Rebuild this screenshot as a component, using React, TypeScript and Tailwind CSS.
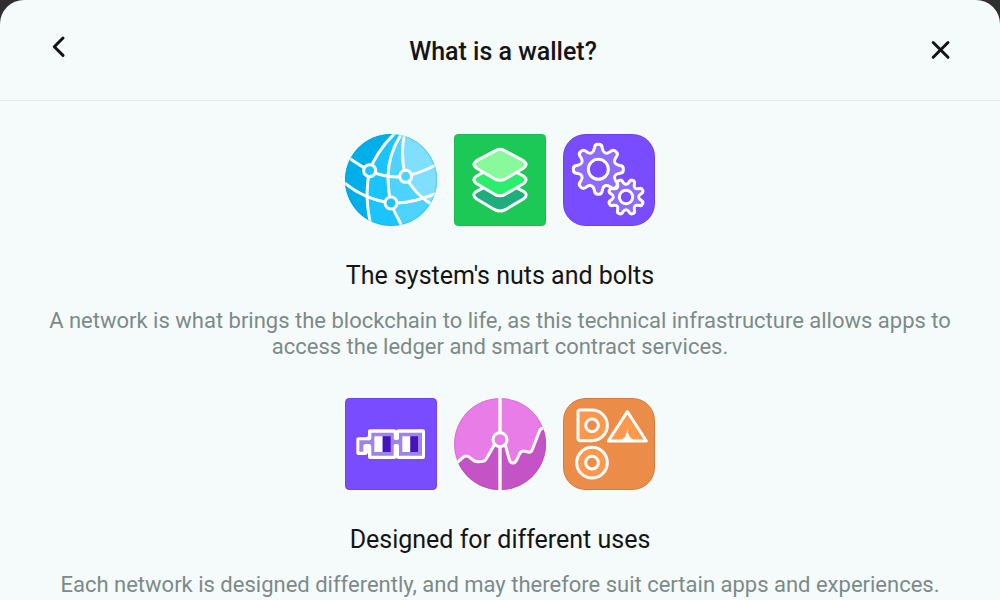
import React, { useId } from "react";

type Point = [number, number];

/** Closed polygon path whose corners are rounded by up to `radius`. */
function roundedPolygon(points: Point[], radius: number): string {
  const n = points.length;
  const toward = (from: Point, to: Point): Point => {
    const dx = to[0] - from[0];
    const dy = to[1] - from[1];
    const len = Math.hypot(dx, dy);
    const t = Math.min(radius, len / 2) / len;
    return [from[0] + dx * t, from[1] + dy * t];
  };
  const f = (p: Point) => `${p[0].toFixed(1)} ${p[1].toFixed(1)}`;
  return (
    points
      .map((p, i) => {
        const a = toward(p, points[(i + n - 1) % n]);
        const b = toward(p, points[(i + 1) % n]);
        return `${i === 0 ? "M" : "L"}${f(a)}Q${f(p)} ${f(b)}`;
      })
      .join("") + "Z"
  );
}

function gear(cx: number, cy: number, outer: number, inner: number, tip: number, base: number, turn: number, radius: number) {
  const points: Point[] = [];
  for (let i = 0; i < 8; i++) {
    const a = ((turn + i * 45) * Math.PI) / 180;
    const at = (r: number, side: number): Point => [
      cx + r * Math.cos(a) - side * Math.sin(a),
      cy + r * Math.sin(a) + side * Math.cos(a),
    ];
    points.push(at(inner, -base), at(outer, -tip), at(outer, tip), at(inner, base));
  }
  return roundedPolygon(points, radius);
}

const BIG_GEAR = gear(131, 132, 75, 52, 10, 14, 0, 9);
const SMALL_GEAR = gear(214, 215, 54, 37, 7, 10, 22.5, 7);

function Art({ label, box, children }: { label: string; box: string; children: React.ReactNode }) {
  return (
    <svg role="img" aria-label={label} viewBox={box} className="size-[92px] shrink-0" fill="none" stroke="none">
      {children}
    </svg>
  );
}

function Globe() {
  const clip = useId();
  return (
    <Art label="Network globe" box="29 26 276 276">
      <clipPath id={clip}>
        <circle cx="167" cy="164" r="138" />
      </clipPath>
      <g clipPath={`url(#${clip})`}>
        <path fill="#1ac5ff" d="M29 26h276v276H29z" />
        <path fill="#00aeea" d="M29 26H177C147 54 120 88 103 136C90 190 94 245 107 302H29z" />
        <path fill="#4dd3ff" d="M197 26C170 70 158 110 158 155C158 190 162 210 166 233C176 258 188 278 199 302H305V26z" />
        <path fill="#80dfff" d="M208 26C199 65 202 110 210 153C228 187 250 214 305 246V26z" />
        <g stroke="#fff" strokeWidth="9">
          <path d="M178 24C148 54 119 90 103 136C90 190 94 245 107 302" />
          <path d="M198 26C170 70 158 110 158 155C158 190 162 210 166 233C176 258 188 278 199 302" />
          <path d="M208 26C198 65 200 110 210 153C228 187 250 214 290 238" />
          <path d="M40 97C66 115 83 126 103 136C136 152 174 158 210 153C242 146 270 135 302 119" />
          <path d="M28 173C66 205 116 226 166 233C216 236 262 220 308 202" />
        </g>
        <circle cx="167" cy="164" r="136.500" stroke="#1683b0" strokeOpacity=".2" strokeWidth="3" />
      </g>
      <g stroke="#fff" strokeWidth="9">
        <circle cx="103" cy="136" r="18" fill="#1ac5ff" />
        <circle cx="211" cy="153" r="18" fill="#4dd3ff" />
        <circle cx="167" cy="233" r="18" fill="#1ac5ff" />
      </g>
    </Art>
  );
}

const LAYER =
  "M153 75Q165 69 177 75L235 106Q252 117 235 129L181 161Q165 169 149 161L95 129Q78 117 95 106Z";

function Layers() {
  return (
    <Art label="Stacked layers" box="27 26 276 276">
      <rect x="27" y="26" width="276" height="276" rx="13" fill="#1dc956" />
      <rect x="28.500" y="27.500" width="273" height="273" rx="12" stroke="#000" strokeOpacity=".06" strokeWidth="3" />
      <g stroke="#fff" strokeWidth="9" strokeLinejoin="round">
        <path transform="translate(0 92)" fill="#1fad7e" d={LAYER} />
        <path transform="translate(0 46)" fill="#2aee6c" d={LAYER} />
        <path fill="#88fa9c" d={LAYER} />
      </g>
    </Art>
  );
}

function Gears() {
  return (
    <Art label="Gears" box="25 26 276 276">
      <rect x="25" y="26" width="276" height="276" rx="68" fill="#794cff" />
      <rect x="26.500" y="27.500" width="273" height="273" rx="66" stroke="#000" strokeOpacity=".1" strokeWidth="3" />
      <g stroke="#fff" strokeWidth="9" strokeLinejoin="round">
        <path fill="#906bff" d={BIG_GEAR} />
        <circle cx="131" cy="132" r="30" fill="#794cff" />
        <path fill="#906bff" d={SMALL_GEAR} />
        <circle cx="214" cy="215" r="20" fill="#794cff" />
      </g>
    </Art>
  );
}

function Glasses() {
  return (
    <Art label="Pixel glasses" box="29 23 276 276">
      <rect x="29" y="23" width="276" height="276" rx="13" fill="#794cff" />
      <rect x="30.500" y="24.500" width="273" height="273" rx="12" stroke="#000" strokeOpacity=".08" strokeWidth="3" />
      <path
        fill="#fff"
        d="M104 117H176Q180 117 183 120Q186 117 190 117H263Q269 117 269 123V200Q269 206 263 206H190Q186 206 183 203Q180 206 176 206H104Q98 206 98 200V187Q96 194 89 194H69Q63 194 63 188V147Q63 141 69 141H92Q98 141 98 135V123Q98 117 104 117Z"
      />
      <path
        fill="#9f82ea"
        d="M108 127H175V144Q175 149 180 149H186Q191 149 191 144V127H260V196H191V167Q191 161 186 161H180Q175 161 175 167V196H108V168Q107 161 101 161H92Q84 161 84 168V184H72V150H99Q108 150 108 142Z"
      />
      <path fill="#fff" d="M117 138h25v47h-25zM201 138h24v47h-24z" />
      <path fill="#4415ba" d="M142 138h24v47h-24zM225 138h23v47h-23z" />
    </Art>
  );
}

const CHART_LINE =
  "M36 218L54 201Q64 193 74 201L84 209Q91 215 100 214L114 213Q121 212 125 204L148 164M181 164L192 205Q195 218 204 218Q212 217 216 207L224 190Q230 180 240 183L249 185Q258 188 263 175L284 121Q287 112 301 113";

function Chart() {
  const clip = useId();
  return (
    <Art label="Market chart" box="27 23 276 276">
      <clipPath id={clip}>
        <circle cx="165" cy="161" r="138" />
      </clipPath>
      <g clipPath={`url(#${clip})`}>
        <path fill="#e87de8" d="M27 23h276v276H27z" />
        <path
          fill="#c453c5"
          d="M36 218L54 201Q64 193 74 201L84 209Q91 215 100 214L114 213Q121 212 125 204L148 164H181L192 205Q195 218 204 218Q212 217 216 207L224 190Q230 180 240 183L249 185Q258 188 263 175L284 121Q287 112 303 113V299H27Z"
        />
        <circle cx="165" cy="161" r="136.500" stroke="#a13ca1" strokeOpacity=".2" strokeWidth="3" />
        <path stroke="#fff" strokeWidth="10" d="M165 20V126M165 168V302" />
        <path stroke="#fff" strokeWidth="9" strokeLinejoin="round" d={CHART_LINE} />
      </g>
      <circle cx="165" cy="148" r="21" fill="#e87de8" stroke="#fff" strokeWidth="9" />
    </Art>
  );
}

function Dao() {
  return (
    <Art label="DAO" box="25 23 276 276">
      <rect x="25" y="23" width="276" height="276" rx="68" fill="#eb8c48" />
      <rect x="26.500" y="24.500" width="273" height="273" rx="66" stroke="#000" strokeOpacity=".1" strokeWidth="3" />
      <g stroke="#fff" strokeWidth="9" strokeLinejoin="round" fill="#ff974c">
        <path d="M77 59H112A46 46 0 0 1 112 151H77Q70 151 70 144V66Q70 59 77 59Z" />
        <circle cx="112" cy="217" r="46" />
        <path d="M218 64L275 152H161Z" />
      </g>
      <path fill="#fff" d="M218 111C219 138 229 147 246 153H190C207 147 217 138 218 111Z" />
      <g stroke="#fff" strokeWidth="9" fill="#eb8c48">
        <circle cx="112" cy="105" r="19" />
        <circle cx="112" cy="217" r="19" />
      </g>
    </Art>
  );
}

function Section({ icons, title, children }: { icons: React.ReactNode; title: string; children: React.ReactNode }) {
  return (
    <section className="flex flex-col items-center text-center">
      <div className="flex gap-[17px]">{icons}</div>
      <h2 className="mt-8 text-[25px] leading-9 text-[#141414]">{title}</h2>
      <p className="mt-[14px] text-[22px] leading-[26px] text-[#7d8a88]">{children}</p>
    </section>
  );
}

export default function App() {
  return (
    <div className="h-screen overflow-hidden bg-[#2f2f2f] font-['Roboto',sans-serif]">
      <main className="min-h-full rounded-t-[24px] bg-[#f5fbfb]">
        <header className="flex h-[101px] items-center justify-between border-b border-[#e4eaea] pl-10 pr-[42px]">
          <button type="button" aria-label="Back" className="mb-2 flex h-9 w-11 items-center justify-start text-[#141414]">
            <svg viewBox="0 0 36 36" className="size-9" fill="none" stroke="currentColor" strokeWidth="3" strokeLinecap="round" strokeLinejoin="round">
              <path d="M23 10L14.300 18.700L23 27.400" />
            </svg>
          </button>
          <h1 className="pt-1 text-[25px] font-medium leading-8 text-[#141414]">What is a wallet?</h1>
          <button type="button" aria-label="Close" className="flex size-9 items-center justify-center text-[#141414]">
            <svg viewBox="0 0 36 36" className="size-9" fill="none" stroke="currentColor" strokeWidth="3" strokeLinecap="round">
              <path d="M11.200 10.500L26 25.300M26 10.500L11.200 25.300" />
            </svg>
          </button>
        </header>
        <div className="flex flex-col gap-[38px] px-10 pt-[33px]">
          <Section icons={<><Globe /><Layers /><Gears /></>} title="The system's nuts and bolts">
            A network is what brings the blockchain to life, as this technical infrastructure allows apps to access the
            ledger and smart contract services.
          </Section>
          <Section icons={<><Glasses /><Chart /><Dao /></>} title="Designed for different uses">
            Each network is designed differently, and may therefore suit certain apps and experiences.
          </Section>
        </div>
      </main>
    </div>
  );
}
